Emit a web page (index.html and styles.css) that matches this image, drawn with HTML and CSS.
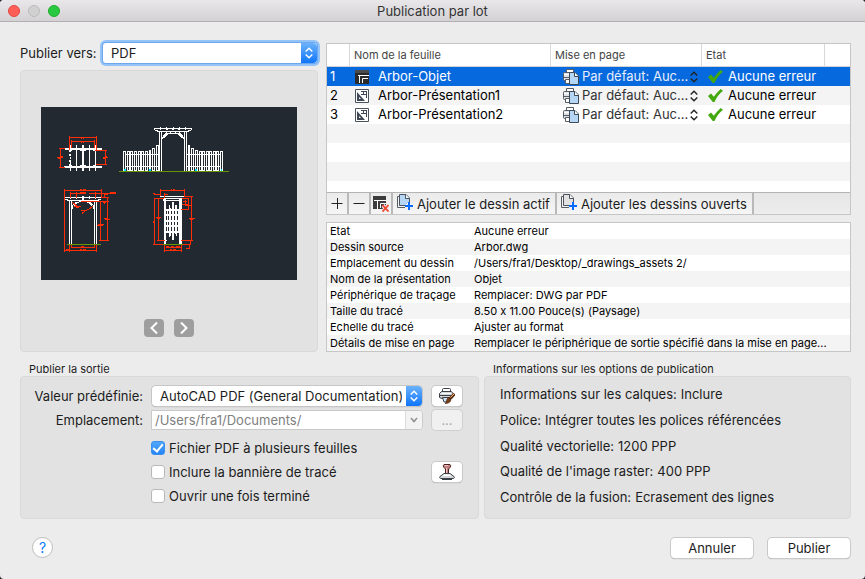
FILE: index.html
```html
<!DOCTYPE html>
<html lang="fr">
<head>
<meta charset="utf-8">
<title>Publication par lot</title>
<link rel="stylesheet" href="styles.css">
</head>
<body>
<svg class="defs" aria-hidden="true">
  <symbol id="i-model" viewBox="0 0 14 14">
    <path fill="#2b2b2b" d="M0 0h14v14H0z"/><path fill="#4a4a4a" d="M0 0h14v3H0z"/>
    <path fill="none" stroke="#fff" d="M3 5.500h11M4.500 5v8M13 8.500H7.500V13"/>
  </symbol>
  <symbol id="i-layout" viewBox="0 0 14 14">
    <path fill="#fff" stroke="#4b535e" d="M.5.5h13v13H.5z"/>
    <path fill="#3f4854" d="M2 3l8 9H2zM4 8v2h2z" fill-rule="evenodd"/>
    <path fill="none" stroke="#3f4854" d="M6 2.500h6M11.500 2v7M8.500 2v4M6 5.500h6"/>
  </symbol>
  <symbol id="i-setup" viewBox="0 0 16 16">
    <path fill="#fff" stroke="#555c64" d="M3.500 4.500v-4h7v3"/>
    <path fill="#dfe3e7" stroke="#555c64" d="M1.500 3.500h8v8h-8q-1 0-1-1v-6q0-1 1-1z"/>
    <path stroke="#fff" d="M1 5.500h6"/><path stroke="#555c64" d="M1 8.500h6"/>
    <path fill="#fff" stroke="#555c64" d="M2.500 10.500h4v4h-4z"/>
    <path fill="#b6d6f5" stroke="#3d4854" d="M6.500 3.500H12l3.500 3.500v8.500h-9z"/>
    <path fill="#fff" stroke="#3d4854" d="M11.500 3.500v4h4"/>
  </symbol>
  <symbol id="i-check" viewBox="0 0 15 14">
    <path fill="#43a80d" d="M0 7L3 4.600l2.800 3.200Q9 3.300 12.700 0L15 1.700Q9.500 6 6.500 13H4.800z"/>
  </symbol>
  <symbol id="i-updown" viewBox="0 0 8 12">
    <path fill="none" stroke="currentColor" stroke-width="1.400" d="M.7 4.500L4 1.200l3.300 3.300M.7 7.500L4 10.800l3.300-3.300"/>
  </symbol>
  <symbol id="i-down" viewBox="0 0 8 6">
    <path fill="none" stroke="currentColor" stroke-width="1.500" d="M1 1l3 3.500L7 1"/>
  </symbol>
  <symbol id="i-plus" viewBox="0 0 12 12"><path fill="none" stroke="#222" d="M.5 5.500h11M6.500 0v11"/></symbol>
  <symbol id="i-minus" viewBox="0 0 12 12"><path fill="none" stroke="#222" d="M.5 5.500h11"/></symbol>
  <symbol id="i-remove" viewBox="0 0 16 16">
    <path fill="#3c3c3c" d="M0 0h13v13H0z"/>
    <path fill="none" stroke="#fff" d="M1 4.500h12M4.500 4v9M13 7.500H7.500V12"/>
    <path fill="none" stroke="#eee" stroke-width="4" d="M10 9.500l6 6M16 9.500l-6 6"/>
    <path fill="none" stroke="#f0432b" stroke-width="1.800" d="M9.500 9l6 6.500M15.500 9l-6 6.500"/>
  </symbol>
  <symbol id="i-sheets" viewBox="0 0 16 16">
    <path fill="#f4f4f4" stroke="#555c64" d="M3 2.500H.5v11H8"/>
    <path fill="currentColor" stroke="#4b535e" d="M2.500.5H9l3.500 3.500v7.500h-10z"/>
    <path fill="#fff" stroke="#4b535e" d="M8.500.5v4h4"/>
    <path stroke="#f0f0f0" stroke-width="4" d="M9 12h7M12 9v7"/>
    <path stroke="#0a6cff" stroke-width="2" d="M8 12h8M12 8v8"/>
  </symbol>
  <symbol id="i-printbrush" viewBox="0 0 16 16">
    <path fill="#fff" stroke="#3a3f45" d="M3.500 4.500v-3q0-1 1-1h6q1 0 1 1v3"/>
    <path fill="#d5d8db" stroke="#3a3f45" d="M2.500 3.500h10l1.500 2v4l-2 1H3l-2.500-1v-4z"/>
    <path stroke="#fff" d="M3 5.500h9"/>
    <path stroke="#3a3f45" d="M1 7.500h11"/><path fill="#cfe3f7" stroke="#3a3f45" d="M3.500 9.500H10l-1 4.500H5z"/>
    <path stroke="#5b2d12" stroke-width="3" d="M10.500 11l5-5"/><path stroke="#f2b36d" d="M11.500 9.500l4-4"/>
    <path fill="#7a3e17" stroke="#3c1d0b" stroke-width=".6" d="M9.500 9.500l2.500 2q-.5 4-6 4 2-1 1.500-3 .5-2 2-3z"/>
  </symbol>
  <symbol id="i-stamp" viewBox="0 0 16 16">
    <path fill="#c58080" stroke="#4b2020" d="M5 .5h6q1.500 1 0 3L9.500 5v4.500h-3V5L5 3.500q-1.500-2 0-3z"/>
    <path stroke="#ecc1c1" d="M5.500 1.500H9M7.500 4v5"/>
    <path fill="#d6d9dc" stroke="#3a3f45" d="M5 9.500h6l4 3q1 1.500-.5 2h-13q-1.500-.5-.5-2z"/>
    <path fill="#fff" d="M5 10.500h6l1 1.500H3.500z"/><path stroke="#3a3f45" d="M3 15.500h10"/>
  </symbol>
</svg>

<main class="window">
  <header class="titlebar">
    <div class="lights"><i class="light close"></i><i class="light idle"></i><i class="light grow"></i></div>
    <h1>Publication par lot</h1>
  </header>

  <div class="content">
    <div class="top">
      <section class="left">
        <div class="target">
          <label for="target">Publier vers:</label>
          <div class="popup focused">
            <select id="target"><option>PDF</option><option>DWF</option></select>
            <span class="cap"><svg width="8" height="12"><use href="#i-updown"/></svg></span>
          </div>
        </div>
        <div class="box preview">
          <svg class="drawing" viewBox="3 6 768 519" shape-rendering="crispEdges" fill="none" stroke-width="3">
            <path fill="#222930" d="M3 6h768v519H3z"/>
            <g stroke="#fff">
              <path stroke-width="6" d="M75 132h111M72 186h114M129 120v78"/>
              <path d="M91.500 120v22M91.500 147v6M91.500 156v6M91.500 165v33M88.500 135v6M88.500 147v6M88.500 165v6M88.500 177v9M109.500 120v78M148.500 120v78M166.500 120v78M87 136.500h9M120 136.500h18M160 136.500h9M87 180h9M120 180h18M160 180h9"/>
              <path d="M342 70.500h114M343 70v6M455 70v6M345 76.500h9M444 76.500h9M350 79.500h98M361.500 66v9M380.500 66v9M399.500 66v9M418.500 66v9M436.500 66v9M358.500 80v118M364.500 80v118M433.500 80v118M439.500 80v118M366 103l6-12 9-9M370 100l12-13 10-4M432 103l-6-12-9-9M428 100l-12-13-10-4M376 84h46"/>
              <path stroke-width="6" d="M378 72h6M396 72h6M415 72h6"/>
              <path d="M250.500 195v-55.500h6V195zM261.500 195v-55.500h6V195zM272.500 195v-55.500h6V195zM283.500 195v-55.500h6V195zM294.500 195v-55.500h6V195zM305.500 195v-55.500h6V195zM316.500 195v-55.500h6V195zM328.500 195v-58.500h3V195zM337.500 195v-64.500h6V195zM349.500 195v-73.500h6V195zM256 148.500h102M256 184.500h102"/>
              <path d="M445.500 195v-73.500h3V195zM454.500 195v-64.500h6V195zM466.500 195v-58.500h6V195zM477.500 195v-55.500h6V195zM488.500 195v-55.500h6V195zM499.500 195v-55.500h6V195zM508.500 195v-55.500h6V195zM519.500 195v-55.500h6V195zM530.500 195v-55.500h6V195zM541.500 195v-55.500h6V195zM441 148.500h102M441 184.500h102"/>
              <path d="M75 277.500h108M75 283.500h10M174 283.500h9M81 286.500h96M91 274v8M109.500 274v8M148.500 274v8M166.500 274v8M88.500 288v129M94.500 288v129M163.500 288v129M169.500 288v129M97 312v-9l9-10h12M102 302l10-11M161 312v-9l-9-10h-12M156 302l-10-11"/>
              <path stroke-width="6" d="M129 273v12M117 288h24"/>
              <path d="M361 274.500h72M361 280.500h72M369 282v6M372 285.500h54M388.500 300v96M408.500 300v93M382.500 316v66M414.500 316v66"/>
              <path stroke-width="6" d="M375 280v137M399 291v114M390 309v84M408 300v86"/>
              <path stroke-width="8" d="M421.500 280v137"/>
              <path stroke-width="6" d="M378 315h40M378 330h40M378 348h40M378 364h40M378 381h40"/>
              <path d="M376 406.500h6"/>
            </g>
            <g stroke="#ff2d06">
              <path d="M88.500 93v42M169.500 93v42M87 97.500h84M94.500 105v24M163.500 105v24M94 108.500h71M123 100.500h3M129 100.500h3M123 112.500h3M129 112.500h3M58 130.500h17M58 187.500h17M61.500 130v57M51 157.500h18M54 160.500h6M63 154.500h6M166 136.500h35M168 178.500h33M196.500 136v42M188 157.500h16M190 160.500h6M196 154.500h6"/>
              <path d="M73.500 252v188M73 256.500h112M184.500 252v28M120 253.500h6M129 253.500h9M91.500 262v16M109.500 262v16M166.500 262v16M91 265.500h48M121 262.500h18M148 265.500h79M211 262.500h17M193 268.500h12M184 277.500h23M202.500 277v129M193.500 268v8M123 289.500h84M181.500 289v117M190 292.500h9M192 295.500h3M177 406.500h30M172 361.500h16M174 358.500h18M193 340.500h12M195 343.500h15M97 292l18 15M103 304.500h20M109 307.500h9M158 304l-12 9-15 6M123 317.500h9M126 323.500h6M126 325.500h3"/>
              <path d="M88.500 420v20M94.500 420v10M163.500 420v10M169.500 420v20M73 436.500h97M94 427.500h70M123 424.500h9M120 433.500h6M129 433.500h9M78 433.500h12"/>
              <path d="M361.500 252v22M433.500 252v24M361 256.500h72M393 253.500h3M399 253.500h6M340 265.500h6M342 268.500h18M372 268.500h12M373.500 263v16M340.500 280.500h30M343.500 280v138M354.500 280v126M352 406.500h22M340 418.500h34M348 337.500h14M350 340.500h9M339 348.500h6M339 351.500h3"/>
              <path d="M436 274.500h22M454.500 274v132M427 280.500h20M444.500 280v33M424 313.500h24M430 289.500h12M427 298.500h18M436.500 286v16M436 301.500h18M447 340.500h18M449 343.500h9M424 406.500h35M424 418.500h28M451.500 406v12M448.500 418v15M438 431.500h9M373.500 420v20M424.500 420v20M373 436.500h52M379 427.500h45M378 424.500h10M393 424.500h10M408 424.500h12M389 433.500h6M399 433.500h10"/>
            </g>
            <path stroke="#679700" d="M237 199.500h330M81 418.500h102M370 418.500h60"/>
            <path stroke="#00e5ff" stroke-width="6" d="M252 195h6M327 195h6M465 195h6M543 195h3"/>
          </svg>
          <div class="nav">
            <button type="button" aria-label="Feuille précédente"><svg width="8" height="12" viewBox="0 0 8 12"><path d="M7 .5L1.500 6 7 11.500"/></svg></button>
            <button type="button" aria-label="Feuille suivante"><svg width="8" height="12" viewBox="0 0 8 12"><path d="M1 .5L6.500 6 1 11.500"/></svg></button>
          </div>
        </div>
      </section>

      <section class="right">
        <div class="sheets">
          <table>
            <colgroup><col class="c-num"><col class="c-name"><col class="c-setup"><col class="c-state"><col class="c-end"></colgroup>
            <thead><tr><th></th><th>Nom de la feuille</th><th>Mise en page</th><th>Etat</th><th></th></tr></thead>
            <tbody>
              <tr class="selected">
                <td>1</td>
                <td><span class="cell name"><svg width="14" height="14"><use href="#i-model"/></svg>Arbor-Objet</span></td>
                <td><span class="cell setup"><svg width="16" height="16"><use href="#i-setup"/></svg><select aria-label="Mise en page 1"><option>Par défaut: Auc...</option></select><svg class="ud" width="8" height="12"><use href="#i-updown"/></svg></span></td>
                <td colspan="2"><span class="cell state"><svg width="15" height="14"><use href="#i-check"/></svg>Aucune erreur</span></td>
              </tr>
              <tr>
                <td>2</td>
                <td><span class="cell name"><svg width="14" height="14"><use href="#i-layout"/></svg>Arbor-Présentation1</span></td>
                <td><span class="cell setup"><svg width="16" height="16"><use href="#i-setup"/></svg><select aria-label="Mise en page 2"><option>Par défaut: Auc...</option></select><svg class="ud" width="8" height="12"><use href="#i-updown"/></svg></span></td>
                <td colspan="2"><span class="cell state"><svg width="15" height="14"><use href="#i-check"/></svg>Aucune erreur</span></td>
              </tr>
              <tr>
                <td>3</td>
                <td><span class="cell name"><svg width="14" height="14"><use href="#i-layout"/></svg>Arbor-Présentation2</span></td>
                <td><span class="cell setup"><svg width="16" height="16"><use href="#i-setup"/></svg><select aria-label="Mise en page 3"><option>Par défaut: Auc...</option></select><svg class="ud" width="8" height="12"><use href="#i-updown"/></svg></span></td>
                <td colspan="2"><span class="cell state"><svg width="15" height="14"><use href="#i-check"/></svg>Aucune erreur</span></td>
              </tr>
            </tbody>
          </table>
          <div class="filler"></div>
          <div class="toolbar">
            <button type="button" class="small" aria-label="Ajouter"><svg width="12" height="12"><use href="#i-plus"/></svg></button>
            <button type="button" class="small" aria-label="Supprimer"><svg width="12" height="12"><use href="#i-minus"/></svg></button>
            <button type="button" class="small" aria-label="Retirer les feuilles"><svg width="16" height="16"><use href="#i-remove"/></svg></button>
            <button type="button" class="wide"><svg class="blue" width="16" height="16"><use href="#i-sheets"/></svg>Ajouter le dessin actif</button>
            <button type="button" class="wide"><svg class="grey" width="16" height="16"><use href="#i-sheets"/></svg>Ajouter les dessins ouverts</button>
          </div>
        </div>

        <table class="details">
          <tbody>
            <tr><th scope="row">Etat</th><td>Aucune erreur</td></tr>
            <tr><th scope="row">Dessin source</th><td>Arbor.dwg</td></tr>
            <tr><th scope="row">Emplacement du dessin</th><td>/Users/fra1/Desktop/_drawings_assets 2/</td></tr>
            <tr><th scope="row">Nom de la présentation</th><td>Objet</td></tr>
            <tr><th scope="row">Périphérique de traçage</th><td>Remplacer: DWG par PDF</td></tr>
            <tr><th scope="row">Taille du tracé</th><td>8.50 x 11.00 Pouce(s) (Paysage)</td></tr>
            <tr><th scope="row">Echelle du tracé</th><td>Ajuster au format</td></tr>
            <tr><th scope="row">Détails de mise en page</th><td>Remplacer le périphérique de sortie spécifié dans la mise en page...</td></tr>
          </tbody>
        </table>
      </section>
    </div>

    <div class="bottom">
      <section>
        <h2>Publier la sortie</h2>
        <div class="box form">
          <label class="lbl" for="preset">Valeur prédéfinie:</label>
          <div class="popup">
            <select id="preset"><option>AutoCAD PDF (General Documentation)</option></select>
            <span class="cap"><svg width="8" height="12"><use href="#i-updown"/></svg></span>
          </div>
          <button type="button" class="btn icon" aria-label="Modifier la mise en page"><svg width="16" height="16"><use href="#i-printbrush"/></svg></button>

          <label class="lbl" for="location">Emplacement:</label>
          <div class="combo">
            <input id="location" type="text" value="/Users/fra1/Documents/" disabled>
            <button type="button" aria-label="Emplacements récents" disabled><svg width="8" height="6"><use href="#i-down"/></svg></button>
          </div>
          <button type="button" class="btn icon" disabled>...</button>

          <label class="check first"><input type="checkbox" checked>Fichier PDF à plusieurs feuilles</label>
          <label class="check"><input type="checkbox">Inclure la bannière de tracé</label>
          <button type="button" class="btn icon" aria-label="Tampon de tracé"><svg width="16" height="16"><use href="#i-stamp"/></svg></button>
          <label class="check"><input type="checkbox">Ouvrir une fois terminé</label>
        </div>
      </section>
      <section>
        <h2>Informations sur les options de publication</h2>
        <dl class="box info">
          <div><dt>Informations sur les calques:</dt><dd>Inclure</dd></div>
          <div><dt>Police:</dt><dd>Intégrer toutes les polices référencées</dd></div>
          <div><dt>Qualité vectorielle:</dt><dd>1200 PPP</dd></div>
          <div><dt>Qualité de l'image raster:</dt><dd>400 PPP</dd></div>
          <div><dt>Contrôle de la fusion:</dt><dd>Ecrasement des lignes</dd></div>
        </dl>
      </section>
    </div>

    <footer class="actions">
      <button type="button" class="help">?</button>
      <button type="button" class="btn">Annuler</button>
      <button type="button" class="btn">Publier</button>
    </footer>
  </div>
</main>
</body>
</html>
```
FILE: styles.css
```css
* { box-sizing: border-box; }
body { margin: 0; background: #20202c; color: #1c1c1c; font: 13px/20px Inter, "Liberation Sans", sans-serif; font-feature-settings: "calt" 0; }
button, select, input { font: inherit; font-feature-settings: inherit; color: inherit; margin: 0; padding: 0; }
svg { display: block; flex: none; }
.defs { display: none; }

.window { min-height: 100vh; background: #ececec; border-radius: 4px; overflow: hidden; }
.titlebar { display: grid; grid-template-columns: 1fr auto 1fr; align-items: center; height: 22px; padding: 0 8px; background: linear-gradient(#e9e7e9, #d3d1d3); border-bottom: 1px solid #b1afb1; }
.titlebar h1 { margin: 0; font-size: 13px; font-weight: 400; color: #333; }
.lights { display: flex; gap: 8px; }
.light { width: 12px; height: 12px; border-radius: 50%; border: 1px solid; }
.close { background: #ff5f57; border-color: #e2463f; }
.idle { background: #d0d0d0; border-color: #bcbcbc; }
.grow { background: #28c940; border-color: #1dad2b; }

.content { padding: 19px 14px 20px 20px; }
.box { background: #e2e2e2; border: 1px solid #d9d9d9; border-radius: 4px; }

.top { display: grid; grid-template-columns: minmax(0, 298fr) minmax(0, 525fr); gap: 8px; }
.left, .right { display: flex; flex-direction: column; }
.right { padding-top: 2px; gap: 7px; }
.target { display: flex; align-items: center; justify-content: space-between; gap: 6px; height: 24px; margin-bottom: 5px; }
.target label { white-space: nowrap; }
.target .popup { flex: 0 1 214px; margin-right: 1px; }

.popup { position: relative; height: 20px; border-radius: 4px; background: #fff; box-shadow: 0 0 0 1px #c6c6c6, 0 1px 1px #999; }
.popup.focused { border-radius: 3px; box-shadow: 0 0 0 1px #6ea8ec, 0 0 0 3px #93c3f7; }
.popup select { width: 100%; height: 20px; padding: 0 20px 0 8px; border: 0; border-radius: 4px; background: transparent; appearance: none; outline: 0; }
.cap { position: absolute; top: 0; right: 0; bottom: 0; width: 16px; display: flex; align-items: center; justify-content: center; color: #fff; background: linear-gradient(#6bb2fa, #0f75fb); border-radius: 0 4px 4px 0; pointer-events: none; }

.preview { flex: 1; display: flex; flex-direction: column; align-items: center; justify-content: space-between; padding: 36px 20px 14px; }
.drawing { width: 100%; height: auto; }
.nav { display: flex; gap: 10px; }
.nav button { display: grid; place-items: center; width: 20px; height: 18px; border: 0; border-radius: 4px; background: #9e9e9e; }
.nav path { fill: none; stroke: #fff; stroke-width: 2; }

.sheets { display: flex; flex-direction: column; background: #fff; border: 1px solid #c6c6c6; }
table { width: 100%; table-layout: fixed; border-collapse: separate; border-spacing: 0; }
th { font-weight: 400; text-align: left; }
th, td { padding: 0; white-space: nowrap; overflow: hidden; }
.c-num { width: 22px; }
.c-setup { width: 151px; }
.c-state { width: 123px; }
.c-end { width: 26px; }
.sheets th { height: 23px; padding: 0 0 0 4px; font-size: 11px; line-height: 20px; color: #444; border-bottom: 1px solid #d2d2d2; border-left: 1px solid #d8d8d8; }
.sheets th:first-child { border-left: 0; }
.sheets td { height: 19px; padding-left: 4px; line-height: 19px; color: #000; }
.sheets tbody tr:nth-child(even) { background: #f4f4f4; }
.sheets td:first-child { padding-left: 3px; }
.sheets .selected { background: #0669de; }
.sheets .selected td { color: #fff; }
.cell { display: flex; align-items: center; height: 19px; }
.name { gap: 9px; padding-left: 2px; }
.setup { padding: 0 3px 0 9px; }
.setup select { flex: 1; min-width: 0; height: 19px; margin-left: 3px; border: 0; background: transparent; appearance: none; color: #333; }
.selected .setup select { color: #e8eefa; }
.ud { color: #222; }
.state { gap: 5px; padding-left: 3px; }
.filler { height: 68px; background: repeating-linear-gradient(#f4f4f4 0 19px, #fff 19px 38px); }

.toolbar { display: flex; height: 22px; background: linear-gradient(#e6e6e6, #ededed); border-top: 1px solid #b4b4b4; }
.toolbar button { display: flex; align-items: center; justify-content: center; border: 0; border-right: 2px solid #b9b9b9; background: linear-gradient(#ebebeb, #f5f5f5); white-space: nowrap; }
.toolbar .small { width: 22px; }
.toolbar .wide { gap: 4px; padding: 0 5px 0 4px; }
.toolbar .wide svg { margin-bottom: 3px; }
.blue { color: #b6d6f5; }
.grey { color: #e2e2e2; }

.details { border: 1px solid #c6c6c6; background: #fff; font-size: 11px; line-height: 16px; color: #000; }
.details th { width: 147px; padding-left: 3px; }
.details td { text-overflow: ellipsis; }
.details tr:nth-child(even) { background: #f4f4f4; }

.bottom { display: grid; grid-template-columns: minmax(0, 459fr) minmax(0, 367fr); gap: 5px; margin-top: 10px; }
.bottom section { display: flex; flex-direction: column; }
.bottom h2 { margin: 0; padding-left: 9px; font-size: 11px; line-height: 14px; font-weight: 400; }
.bottom .box { flex: 1; margin: 0; }
.form { display: grid; grid-template-columns: 122px minmax(0, 1fr) 32px; grid-auto-rows: 24px; column-gap: 8px; align-items: center; padding: 7px 15px 14px 0; }
.form .popup { margin: 0 1px; }
.lbl { text-align: right; white-space: nowrap; }
.combo { display: flex; height: 20px; background: #fff; border: 1px solid #c9c9c9; border-radius: 0 4px 4px 0; overflow: hidden; }
.combo input { flex: 1; min-width: 0; padding-left: 3px; border: 0; background: #fff; color: #808080; }
.combo button { display: grid; place-items: center; width: 17px; border: 0; border-left: 1px solid #dcdcdc; background: #f3f3f3; color: #8f8f8f; }
.check { grid-column: 2; display: flex; align-items: center; gap: 4px; white-space: nowrap; }
.check input { appearance: none; width: 14px; height: 14px; border: 1px solid #b9b9b9; border-radius: 3px; background: #fff; display: grid; place-items: center; }
.check input:checked { background: linear-gradient(#52a7fa, #2585f9); border-color: #3a8fee; }
.check input:checked::after { content: ""; width: 4px; height: 8px; margin-bottom: 2px; border: solid #fff; border-width: 0 2px 2px 0; transform: rotate(40deg); }
.form > :nth-child(n+7) { margin-top: 4px; margin-bottom: -4px; }

.btn { height: 20px; border: 0; border-radius: 4px; background: #fff; box-shadow: 0 0 0 1px #c9c9c9, 0 1px 1px #999; }
.btn.icon { display: grid; place-items: center; width: 30px; margin-left: 1px; }
.btn:disabled { background: #f0f0f0; color: #a8a8a8; box-shadow: 0 0 0 1px #cfcfcf; }

.info { display: flex; flex-direction: column; justify-content: space-between; padding: 7px 15px 11px; }
.info div { display: flex; gap: 4px; white-space: nowrap; }
.info dd { margin: 0; }

.actions { display: flex; align-items: center; gap: 14px; margin-top: 18px; padding-left: 12px; }
.actions .btn { width: 82px; margin-right: 1px; }
.help { width: 21px; height: 21px; margin-right: auto; border: 1px solid #bdbdbd; border-radius: 50%; background: #fff; color: #0a7cff; font-size: 14px; line-height: 18px; }
```
